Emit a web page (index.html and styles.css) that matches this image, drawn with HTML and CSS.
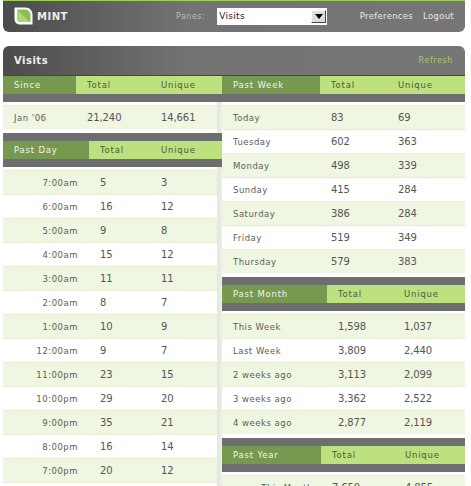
FILE: index.html
```html
<!DOCTYPE html>
<html lang="en">
<head>
<meta charset="utf-8">
<title>Mint</title>
<link rel="stylesheet" href="styles.css">
</head>
<body>
<div class="page">
  <header class="topbar">
    <div class="brand">
      <svg class="logo" width="19" height="18" viewBox="0 0 19 18"><path d="M1 0.5H11C16 0.5 18.5 4 18.5 8V17.5H6C2.500 17.500 0.500 15 0.500 12V1Z" fill="#fff"/><path d="M3 2.500H11C14.500 2.500 16.500 5 16.500 8.500V15H6.500C4.500 15 3 13.500 3 11.500Z" fill="#8dbb55"/><path d="M3 2.500L15.500 15H6.500C4.500 15 3 13.500 3 11.500Z" fill="#aed672"/></svg>
      <span>MINT</span>
    </div>
    <div class="panes">
      <span class="panes-label">Panes:</span>
      <div class="select"><span>Visits</span><i class="select-btn"><svg width="8" height="5" viewBox="0 0 8 5"><path d="M0 0H8L4 5Z" fill="#000"/></svg></i></div>
    </div>
    <nav class="nav"><a>Preferences</a><a>Logout</a></nav>
  </header>

  <section class="panel">
    <div class="panel-head"><h1>Visits</h1><a class="refresh">Refresh</a></div>
    <div class="cols">
      <div class="col col-left">
        <div class="tbl since">
          <div class="thead"><b>Since</b><span>Total</span><span>Unique</span></div>
          <div class="row"><em>Jan '06</em><span>21,240</span><span>14,661</span></div>
        </div>
        <div class="tbl day later">
          <div class="thead"><b>Past Day</b><span>Total</span><span>Unique</span></div>
          <div class="row"><em>7:00am</em><span>5</span><span>3</span></div>
          <div class="row"><em>6:00am</em><span>16</span><span>12</span></div>
          <div class="row"><em>5:00am</em><span>9</span><span>8</span></div>
          <div class="row"><em>4:00am</em><span>15</span><span>12</span></div>
          <div class="row"><em>3:00am</em><span>11</span><span>11</span></div>
          <div class="row"><em>2:00am</em><span>8</span><span>7</span></div>
          <div class="row"><em>1:00am</em><span>10</span><span>9</span></div>
          <div class="row"><em>12:00am</em><span>9</span><span>7</span></div>
          <div class="row"><em>11:00pm</em><span>23</span><span>15</span></div>
          <div class="row"><em>10:00pm</em><span>29</span><span>20</span></div>
          <div class="row"><em>9:00pm</em><span>35</span><span>21</span></div>
          <div class="row"><em>8:00pm</em><span>16</span><span>14</span></div>
          <div class="row"><em>7:00pm</em><span>20</span><span>12</span></div>
          <div class="row"></div>
        </div>
      </div>
      <div class="col col-right">
        <div class="tbl week">
          <div class="thead"><b>Past Week</b><span>Total</span><span>Unique</span></div>
          <div class="row"><em>Today</em><span>83</span><span>69</span></div>
          <div class="row"><em>Tuesday</em><span>602</span><span>363</span></div>
          <div class="row"><em>Monday</em><span>498</span><span>339</span></div>
          <div class="row"><em>Sunday</em><span>415</span><span>284</span></div>
          <div class="row"><em>Saturday</em><span>386</span><span>284</span></div>
          <div class="row"><em>Friday</em><span>519</span><span>349</span></div>
          <div class="row"><em>Thursday</em><span>579</span><span>383</span></div>
        </div>
        <div class="tbl month later">
          <div class="thead"><b>Past Month</b><span>Total</span><span>Unique</span></div>
          <div class="row"><em>This Week</em><span>1,598</span><span>1,037</span></div>
          <div class="row"><em>Last Week</em><span>3,809</span><span>2,440</span></div>
          <div class="row"><em>2 weeks ago</em><span>3,113</span><span>2,099</span></div>
          <div class="row"><em>3 weeks ago</em><span>3,362</span><span>2,522</span></div>
          <div class="row"><em>4 weeks ago</em><span>2,877</span><span>2,119</span></div>
        </div>
        <div class="tbl year later">
          <div class="thead"><b>Past Year</b><span>Total</span><span>Unique</span></div>
          <div class="row"><em>This Month</em><span>7,650</span><span>4,855</span></div>
        </div>
      </div>
    </div>
  </section>
</div>
</body>
</html>
```

FILE: styles.css
```css
* { box-sizing: border-box; }
html, body { margin: 0; height: 486px; overflow: hidden; background: #fff; }
body { font-family: "DejaVu Sans", sans-serif; font-size: 9px; color: #555; }
.page { margin-left: 3px; width: 462px; }

.topbar {
  height: 32px;
  border-top: 1px solid #9fd14f;
  border-radius: 0 0 6px 6px;
  background: linear-gradient(90deg, #4c4c4c 0, #737373 40%, #767676 100%);
  display: flex;
  align-items: center;
  padding: 0 11px 1px 11px;
  color: #fff;
}
.brand { display: flex; align-items: center; gap: 4px; font-weight: bold; font-size: 10px; letter-spacing: .5px; color: #eee; width: 162px; }
.logo { display: block; }
.panes { display: flex; align-items: center; gap: 12px; }
.panes-label { color: #bbb; font-size: 8px; letter-spacing: .5px; }
.select { width: 110px; height: 17px; background: #fff; display: flex; align-items: center; justify-content: space-between; padding: 0 1px 0 2px; color: #222; font-size: 9px; letter-spacing: .3px; }
.select-btn { width: 15px; height: 13px; display: flex; align-items: center; justify-content: center; background: #ddd; border: 1px solid; border-color: #fff #444 #444 #fff; }
.nav { margin-left: auto; display: flex; gap: 10px; font-size: 8.5px; letter-spacing: .3px; color: #e8e8e8; }

.panel { margin-top: 14px; }
.panel-head {
  height: 29px;
  border-radius: 6px 6px 0 0;
  background: linear-gradient(90deg, #4c4c4c 0, #737373 40%, #767676 100%);
  display: flex;
  align-items: center;
  justify-content: space-between;
  padding: 0 12px 0 11px;
}
.panel-head h1 { margin: 0; color: #f0f0f0; font-size: 10px; letter-spacing: .5px; font-weight: bold; }
.refresh { color: #a6c868; font-size: 8px; letter-spacing: .6px; }

.cols { display: flex; align-items: flex-start; border-top: 1px solid #444; }
.col-left { width: 219px; }
.col-right { width: 243px; }
.later { margin-top: 4px; }
.later .thead { border-top: 8px solid #6e6e6e; }
.tbl { display: grid; }

.thead {
  display: grid;
  grid-template-columns: subgrid;
  grid-column: 1 / -1;
  height: 26px;
  border-bottom: 8px solid #6e6e6e;
  background: #bde17f;
  font-size: 8.5px;
  letter-spacing: .8px;
  color: #4d5a3a;
  align-items: center;
}
.later .thead { height: 34px; }
.thead b { align-self: stretch; display: flex; align-items: center; padding-left: 11px; background: #77984f; color: #f2f6e8; font-weight: normal; }
.thead span { padding-left: 11px; }

.row {
  display: grid;
  grid-template-columns: subgrid;
  grid-column: 1 / -1;
  height: 24px;
  align-items: center;
  background: #fff;
  border-top: 1px solid #e5f0d2;
  font-size: 10px;
  letter-spacing: -.1px;
  color: #555;
}
.thead + .row { margin-top: 3px; }
.row:nth-child(even) { background: #eff6e2; }
.row span { padding-left: 11px; }
.row em { font-style: normal; font-size: 8.5px; letter-spacing: .5px; padding-left: 11px; color: #5c5c5c; }

.col-left .row { margin-right: 5px; }
.col-left { background: linear-gradient(90deg, #e4e7dc, #eceee8) no-repeat 214px 0 / 5px 100%; }

.since { grid-template-columns: 73px 74px 72px; }
.since .row { grid-template-columns: 73px 74px 67px; }
.day { grid-template-columns: 86px 61px 72px; }
.day .row em { padding-left: 0; padding-right: 11px; text-align: right; }
.week { grid-template-columns: 98px 67px 78px; }
.month { grid-template-columns: 105px 66px 72px; }
.year { grid-template-columns: 99px 73px 71px; }
.year .row em { text-align: right; padding-right: 8px; }
```
